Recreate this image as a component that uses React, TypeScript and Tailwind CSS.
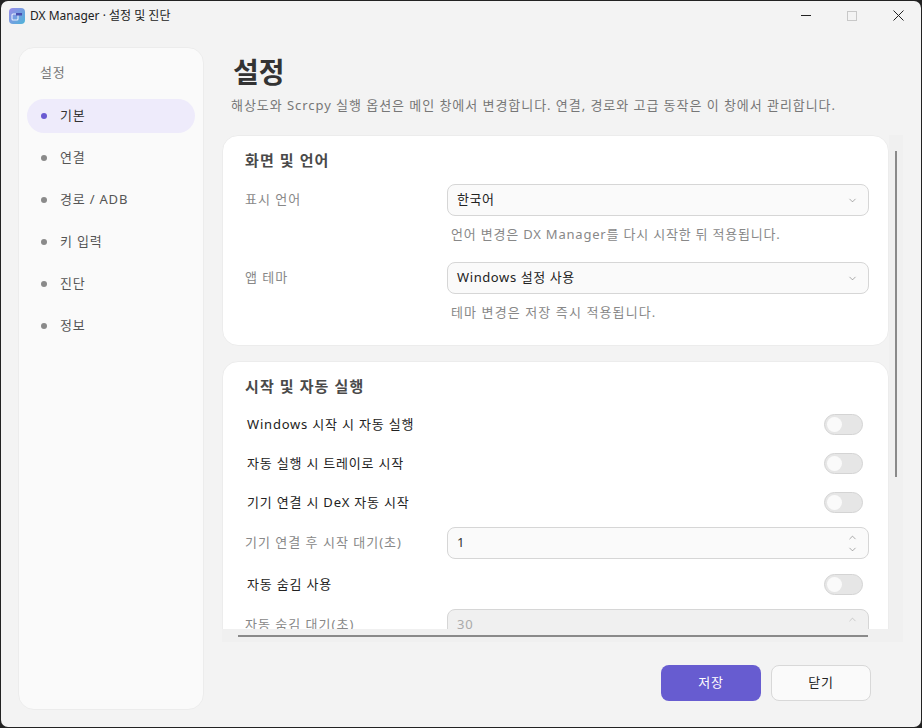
import { ChevronDown, ChevronUp } from 'lucide-react'

const font = { fontFamily: '"Noto Sans", "Noto Sans CJK KR", sans-serif' }

const navItems = ['기본', '연결', '경로 / ADB', '키 입력', '진단', '정보']

function Toggle() {
  return (
    <div className="w-[39px] h-[21px] rounded-full bg-[#e6e6e6] border border-[#d4d4d4] flex items-center pl-[2px]">
      <div className="w-[15px] h-[15px] rounded-full bg-[#fafafa]" />
    </div>
  )
}

function ToggleRow({ label }: { label: string }) {
  return (
    <div className="h-[39px] flex items-center justify-between pl-[2px] pr-[6px] text-[13px] text-[#222]">
      <span>{label}</span>
      <Toggle />
    </div>
  )
}

function Select({ value }: { value: string }) {
  return (
    <div className="w-[422px] h-[32px] rounded-[8px] border border-[#d6d6d6] bg-[#fafafa] flex items-center justify-between pl-[9px] pr-[10px] text-[13px] tracking-[0.6px] text-[#222]">
      <span>{value}</span>
      <ChevronDown size={11} strokeWidth={1.2} className="text-[#666]" />
    </div>
  )
}

function Spin({ value, disabled }: { value: string; disabled?: boolean }) {
  return (
    <div className={`w-[422px] h-[32px] rounded-[8px] border border-[#d6d6d6] flex items-center justify-between pl-[9px] pr-[10px] text-[13px] ${disabled ? 'bg-[#f0f0f0] text-[#aaa]' : 'bg-[#fafafa] text-[#333]'}`}>
      <span>{value}</span>
      <div className="flex flex-col items-center gap-[1px]">
        <ChevronUp size={11} strokeWidth={1.2} className={disabled ? 'text-[#aaa]' : 'text-[#666]'} />
        <ChevronDown size={11} strokeWidth={1.2} className={disabled ? 'text-[#aaa]' : 'text-[#666]'} />
      </div>
    </div>
  )
}

export default function App() {
  return (
    <div className="w-[922px] h-[728px] bg-[#222] p-px">
      <div style={font} className="w-full h-full bg-[#f3f3f3] rounded-[7px] overflow-hidden flex flex-col">
        {/* Title bar */}
        <div className="h-[29px] shrink-0 flex items-center pl-[8px] text-[12px] text-[#222]">
          <svg width="16" height="16" viewBox="0 0 16 16" className="mr-[5px]">
            <defs>
              <linearGradient id="logo" x1="0" y1="0" x2="1" y2="1">
                <stop offset="0" stopColor="#9a8ae8" />
                <stop offset="1" stopColor="#4db4d8" />
              </linearGradient>
            </defs>
            <rect width="16" height="16" rx="4" fill="url(#logo)" />
            <rect x="3" y="6" width="6" height="6" rx="1" fill="none" stroke="#e8eefc" strokeWidth="1.1" />
            <rect x="7" y="5" width="6" height="2.5" fill="#4a4fb0" />
          </svg>
          <span>DX Manager · 설정 및 진단</span>
          <div className="ml-auto flex items-center pr-[17px] gap-[36px]">
            <div className="w-[10px] h-px bg-[#222]" />
            <div className="w-[10px] h-[10px] border border-[#c8c8c8]" />
            <svg width="11" height="11" viewBox="0 0 11 11" stroke="#222" strokeWidth="1">
              <path d="M0.5 0.5L10.5 10.5M10.5 0.5L0.5 10.5" />
            </svg>
          </div>
        </div>

        <div className="flex-1 flex min-h-0 tracking-[0.8px]">
          {/* Sidebar */}
          <aside className="w-[186px] shrink-0 ml-[17px] mt-[17px] mb-[17px] rounded-[16px] bg-[#fafafa] border border-[#ececec] px-[8px]">
            <div className="pl-[13px] pt-[15px] h-[51px] text-[13px] text-[#777]">설정</div>
            <div className="flex flex-col gap-[8px]">
              {navItems.map((item, i) => (
                <div
                  key={item}
                  className={`h-[34px] rounded-full flex items-center pl-[14px] gap-[13px] text-[13px] ${i === 0 ? 'bg-[#eeebfb] text-[#333]' : 'text-[#555]'}`}
                >
                  <div className={`w-[6px] h-[6px] rounded-full ${i === 0 ? 'bg-[#6a5bd2]' : 'bg-[#8a8a8a]'}`} />
                  <span>{item}</span>
                </div>
              ))}
            </div>
          </aside>

          {/* Main */}
          <main className="flex-1 min-w-0 flex flex-col ml-[18px]">
            <h1 className="pl-[11px] mt-[23px] h-[38px] text-[28px] tracking-normal leading-[38px] font-bold text-[#333]">설정</h1>
            <p className="pl-[9px] mt-[5px] h-[18px] text-[13px] leading-[18px] tracking-[0.95px] text-[#777] whitespace-nowrap">
              해상도와 Scrcpy 실행 옵션은 메인 창에서 변경합니다. 연결, 경로와 고급 동작은 이 창에서 관리합니다.
            </p>

            <div className="mt-[21px] h-[494px] flex">
              <div className="w-[667px] overflow-hidden flex flex-col gap-[15px]">
                <section className="shrink-0 h-[211px] bg-white border border-[#ececec] rounded-[16px] pl-[22px] pr-[19px] pt-[14px]">
                  <h2 className="text-[15px] leading-[20px] tracking-[1.1px] font-bold text-[#4a4a4a]">화면 및 언어</h2>
                  <div className="mt-[14px] flex justify-between">
                    <span className="text-[13px] leading-[30px] tracking-[1px] text-[#888]">표시 언어</span>
                    <Select value="한국어" />
                  </div>
                  <p className="ml-[206px] mt-[9px] text-[13px] leading-[18px] text-[#888]">언어 변경은 DX Manager를 다시 시작한 뒤 적용됩니다.</p>
                  <div className="mt-[19px] flex justify-between">
                    <span className="text-[13px] leading-[30px] tracking-[1px] text-[#888]">앱 테마</span>
                    <Select value="Windows 설정 사용" />
                  </div>
                  <p className="ml-[206px] mt-[9px] text-[13px] leading-[18px] tracking-[1.1px] text-[#888]">테마 변경은 저장 즉시 적용됩니다.</p>
                </section>

                <section className="shrink-0 bg-white border border-[#ececec] rounded-[16px] pl-[22px] pr-[19px] pt-[14px] pb-[40px]">
                  <h2 className="text-[15px] leading-[20px] tracking-[1.1px] font-bold text-[#4a4a4a]">시작 및 자동 실행</h2>
                  <div className="mt-[9px]">
                    <ToggleRow label="Windows 시작 시 자동 실행" />
                    <ToggleRow label="자동 실행 시 트레이로 시작" />
                    <ToggleRow label="기기 연결 시 DeX 자동 시작" />
                  </div>
                  <div className="mt-[5px] flex justify-between">
                    <span className="text-[13px] leading-[30px] tracking-[1px] text-[#888]">기기 연결 후 시작 대기(초)</span>
                    <Spin value="1" />
                  </div>
                  <div className="mt-[6px]">
                    <ToggleRow label="자동 숨김 사용" />
                  </div>
                  <div className="mt-[5px] flex justify-between">
                    <span className="text-[13px] leading-[30px] tracking-[1px] text-[#888]">자동 숨김 대기(초)</span>
                    <Spin value="30" disabled />
                  </div>
                </section>
              </div>
              <div className="w-[14px] bg-[#f0f0f0] flex justify-center pt-[16px]">
                <div className="w-[2px] h-[326px] bg-[#8a8a8a]" />
              </div>
            </div>

            <div className="h-[13px] w-[681px] bg-[#f0f0f0] pl-[16px] pt-[6px] shrink-0">
              <div className="w-[630px] h-[2px] bg-[#8a8a8a]" />
            </div>

            <div className="mt-[23px] w-[649px] flex justify-end gap-[10px] text-[13px]">
              <button className="w-[100px] h-[36px] rounded-[8px] bg-[#675cd0] text-white">저장</button>
              <button className="w-[100px] h-[36px] rounded-[8px] bg-[#fafafa] border border-[#d8d8d8] text-[#222]">닫기</button>
            </div>
          </main>
        </div>
      </div>
    </div>
  )
}
